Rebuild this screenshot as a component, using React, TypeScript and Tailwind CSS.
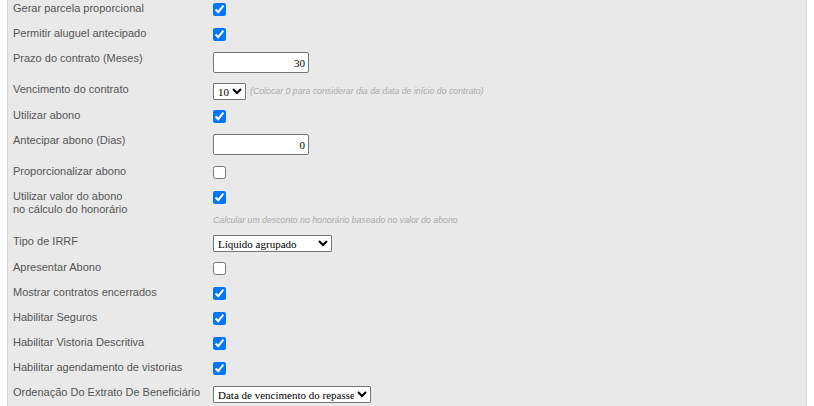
import React from "react";

const font = "font-['Liberation_Sans',Arial,sans-serif]";

function Label({ children }: { children: React.ReactNode }) {
  return (
    <div className="w-[200px] shrink-0 pt-[1px] text-[11px] leading-[13px] text-[#555]">
      {children}
    </div>
  );
}

function Check({ checked }: { checked: boolean }) {
  return (
    <input
      type="checkbox"
      defaultChecked={checked}
      className="m-0 block h-[13px] w-[13px]"
    />
  );
}

function CheckRow({ label, checked }: { label: string; checked: boolean }) {
  return (
    <div className="flex h-[25px] items-start">
      <Label>{label}</Label>
      <div className="pt-[2px]">
        <Check checked={checked} />
      </div>
    </div>
  );
}

function NumRow({ label, value }: { label: string; value: string }) {
  return (
    <div className="flex h-[31px] items-start">
      <Label>{label}</Label>
      <div className="pt-[1px]">
        <input
          type="text"
          defaultValue={value}
          className="block h-[21px] w-[96px] rounded-[2px] border border-[#767676] bg-white px-[3px] text-right font-['Liberation_Serif',serif] text-[11px] text-black"
        />
      </div>
    </div>
  );
}

const selectCls =
  "block h-[17px] rounded-[1px] border border-[#767676] bg-white font-['Liberation_Serif',serif] text-[11px] leading-[13px] text-black";

export default function App() {
  return (
    <div className={`${font} min-h-[406px] w-[814px] bg-white`}>
      <div className="ml-[7px] min-h-[406px] w-[800px] border-x border-[#d6d6d6] bg-[#e9e9e9] pl-[5px] pt-[1px]">
        <CheckRow label="Gerar parcela proporcional" checked />
        <CheckRow label="Permitir aluguel antecipado" checked />
        <NumRow label="Prazo do contrato (Meses)" value="30" />
        <div className="flex h-[26px] items-start">
          <Label>Vencimento do contrato</Label>
          <div className="flex items-center gap-[4px] pt-[1px]">
            <select defaultValue="10" className={`${selectCls} w-[33px]`}>
              <option value="10">10</option>
            </select>
            <span className="text-[8.75px] italic leading-[13px] text-[#aaa]">
              (Colocar 0 para considerar dia da data de início do contrato)
            </span>
          </div>
        </div>
        <CheckRow label="Utilizar abono" checked />
        <NumRow label="Antecipar abono (Dias)" value="0" />
        <CheckRow label="Proporcionalizar abono" checked={false} />
        <div className="flex h-[45px] items-start">
          <Label>
            Utilizar valor do abono
            <br />
            no cálculo do honorário
          </Label>
          <div className="pt-[2px]">
            <Check checked />
            <div className="mt-[10px] text-[8.75px] italic leading-[13px] text-[#aaa]">
              Calcular um desconto no honorário baseado no valor do abono
            </div>
          </div>
        </div>
        <div className="flex h-[26px] items-start">
          <Label>Tipo de IRRF</Label>
          <div className="pt-[1px]">
            <select defaultValue="a" className={`${selectCls} h-[16px] w-[119px]`}>
              <option value="a">Líquido agrupado</option>
            </select>
          </div>
        </div>
        <CheckRow label="Apresentar Abono" checked={false} />
        <CheckRow label="Mostrar contratos encerrados" checked />
        <CheckRow label="Habilitar Seguros" checked />
        <CheckRow label="Habilitar Vistoria Descritiva" checked />
        <CheckRow label="Habilitar agendamento de vistorias" checked />
        <div className="flex h-[22px] items-start">
          <Label>Ordenação Do Extrato De Beneficiário</Label>
          <div className="pt-[1px]">
            <select defaultValue="a" className={`${selectCls} w-[158px]`}>
              <option value="a">Data de vencimento do repasse</option>
            </select>
          </div>
        </div>
      </div>
    </div>
  );
}
